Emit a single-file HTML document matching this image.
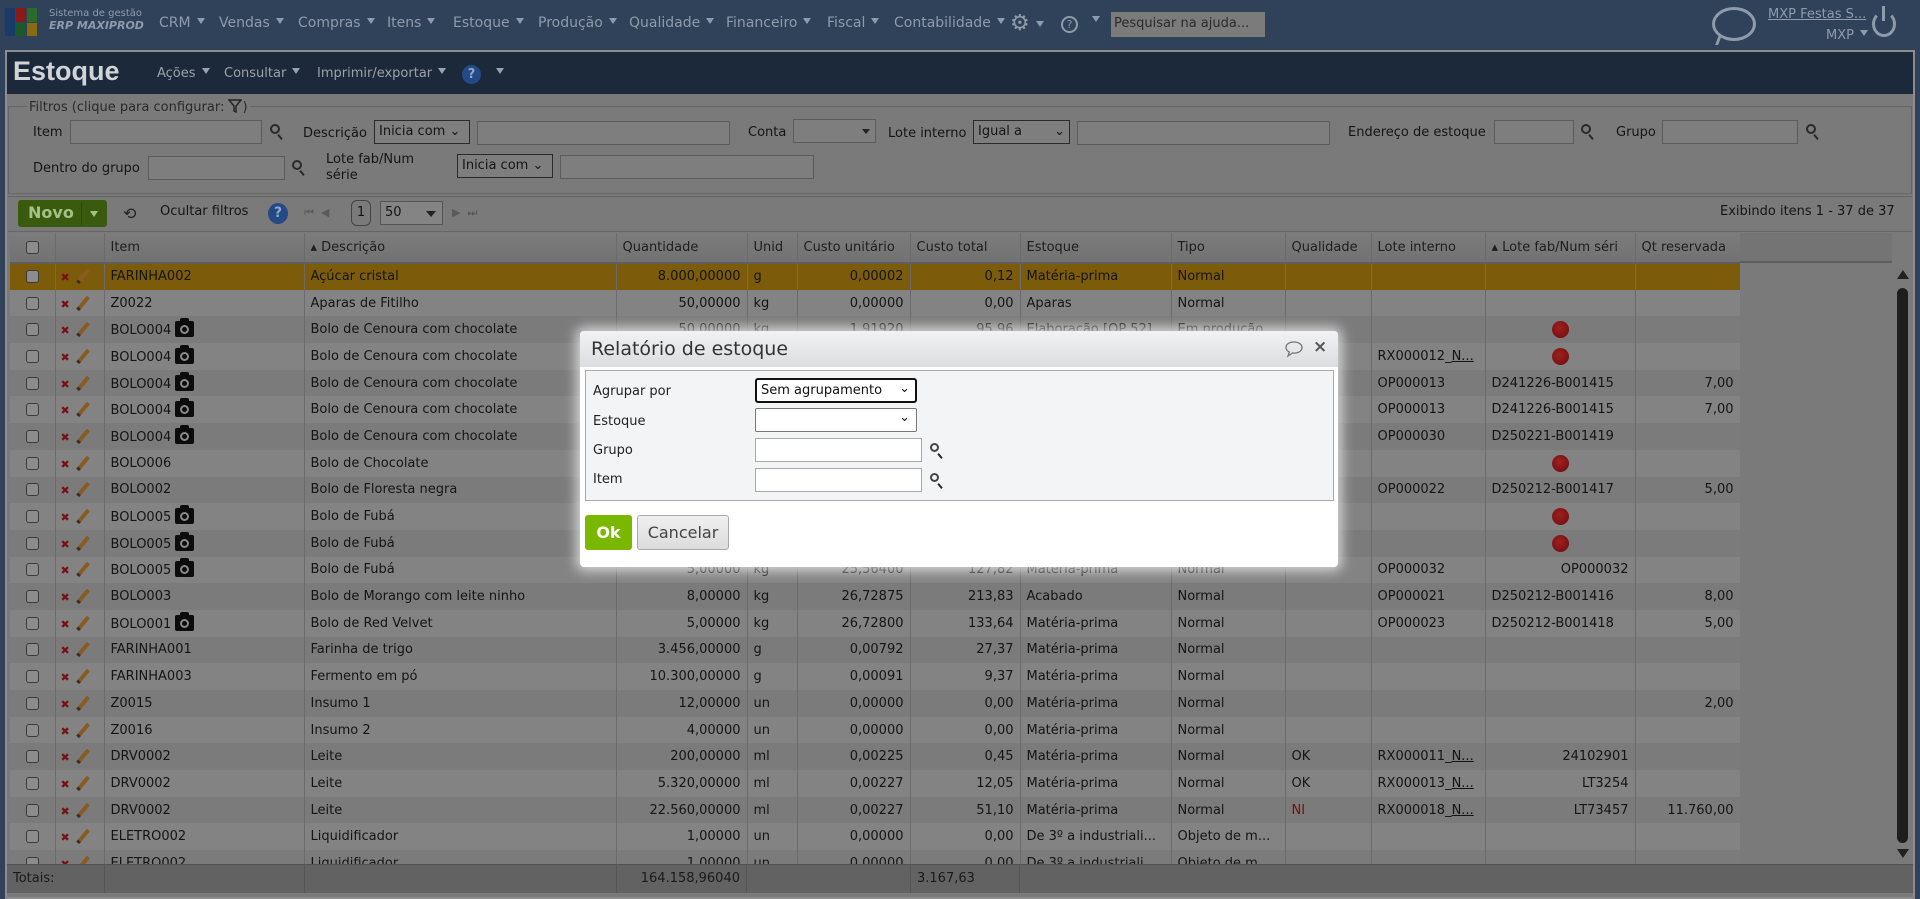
<!DOCTYPE html>
<html><head><meta charset="utf-8">
<style>
*{box-sizing:border-box;margin:0;padding:0}
body{width:1920px;height:899px;overflow:hidden;background:#2f4259;font-family:"DejaVu Sans","Liberation Sans",sans-serif;font-size:13px;color:#151515;position:relative}
.a{position:absolute;white-space:nowrap}
.nav{color:#8f9bab;font-size:14px;top:15px}
.tri{display:inline-block;width:0;height:0;border-left:4px solid transparent;border-right:4px solid transparent;border-top:6px solid #8f9bab;margin-left:6px;vertical-align:3px}
.frame{position:absolute;left:5px;top:50px;width:1910px;height:849px;background:#7a7a7a;border:2px solid #8c8c8c}
.hdr{position:absolute;left:7px;top:52px;width:1906px;height:42px;background:#1b293a}
.inp{position:absolute;background:#7e7e7e;border:1px solid #5c5c5c;height:24px}
.sel{position:absolute;background:#7e7e7e;border:1px solid #2a2a2a;height:24px;font-size:13px;padding:3px 4px}
.mag{position:absolute;width:10px;height:10px;border:2px solid #2a2a2a;border-radius:50%}
.mag:after{content:"";position:absolute;left:7px;top:8px;width:2px;height:6px;background:#2a2a2a;transform:rotate(-40deg)}
.lbl{position:absolute;font-size:13px;color:#151515}
table{position:absolute;left:10px;top:233px;border-collapse:collapse;table-layout:fixed}
td,th{height:26.7px;border-right:1px solid #6b6b6b;padding:0 6px;white-space:nowrap;overflow:hidden;font-weight:normal;text-align:left;font-size:13px}
th{height:30px;background:linear-gradient(#7c7c7c,#727272);border-bottom:2px solid #5e5e5e;color:#1e1e1e}
tr:nth-child(odd) td{background:#838383}
tr:nth-child(even) td{background:#7b7b7b}
tr.hl td{background:#7c5b0b!important}
td.r{text-align:right}
.cb{display:inline-block;width:13px;height:13px;border:1px solid #3a3a3a;border-radius:3px;background:#8c8c8c;vertical-align:middle}
.x{color:#7a1010;font-size:11px;font-weight:bold;margin-left:-1px}
.pen{display:inline-block;width:4px;height:17px;background:#8a5a22;transform:rotate(40deg);margin-left:11px;vertical-align:-4px;border-bottom:3px solid #3a3020;border-radius:1px}
.cam{display:inline-block;width:19px;height:16px;background:#0c0c0c;border-radius:2px;vertical-align:-3px;position:relative;margin-left:4px}
.cam:before{content:"";position:absolute;left:5px;top:-3px;width:9px;height:4px;background:#0c0c0c;border-radius:2px 2px 0 0}
.cam:after{content:"";position:absolute;left:5px;top:4px;width:9px;height:9px;border-radius:50%;border:2px solid #8a8a8a;box-sizing:border-box}
.dot{display:inline-block;width:17px;height:17px;border-radius:50%;background:radial-gradient(circle at 45% 40%,#a02020,#6a0c0c);vertical-align:middle}
.ni{color:#7a0c0c}
.u{text-decoration:underline}
</style></head><body>
<div class="a" style="left:5px;top:8px;width:32px;height:30px">
<div class="a" style="left:0;top:0;width:10px;height:28px;background:#1a3a6a"></div>
<div class="a" style="left:11px;top:0;width:10px;height:14px;background:#8a1a1a"></div>
<div class="a" style="left:11px;top:15px;width:10px;height:13px;background:#1a5a2a"></div>
<div class="a" style="left:22px;top:0;width:10px;height:14px;background:#2a6a2a"></div>
<div class="a" style="left:22px;top:15px;width:10px;height:13px;background:#8a6a10"></div>
</div>
<div class="a" style="left:49px;top:8px;color:#8f9bab;font-size:10px;line-height:12px">Sistema de gestão<br><b style="font-size:11px;font-style:italic">ERP MAXIPROD</b></div>
<div class="a nav" style="left:159px">CRM<span class="tri"></span></div>
<div class="a nav" style="left:219px">Vendas<span class="tri"></span></div>
<div class="a nav" style="left:298px">Compras<span class="tri"></span></div>
<div class="a nav" style="left:387px">Itens<span class="tri"></span></div>
<div class="a nav" style="left:453px">Estoque<span class="tri"></span></div>
<div class="a nav" style="left:538px">Produção<span class="tri"></span></div>
<div class="a nav" style="left:629px">Qualidade<span class="tri"></span></div>
<div class="a nav" style="left:726px">Financeiro<span class="tri"></span></div>
<div class="a nav" style="left:827px">Fiscal<span class="tri"></span></div>
<div class="a nav" style="left:894px">Contabilidade<span class="tri"></span></div>
<div class="a nav" style="left:1010px;top:11px;font-size:22px">⚙<span class="tri"></span></div>
<div class="a" style="left:1061px;top:16px;width:17px;height:17px;border:2px solid #8f9bab;border-radius:50%;color:#8f9bab;font-size:11px;text-align:center;line-height:13px">?</div>
<div class="a nav" style="left:1086px;top:13px"><span class="tri"></span></div>
<div class="a" style="left:1111px;top:12px;width:154px;height:25px;background:#7b7b7b;color:#2b2b2b;font-size:13px;padding:4px 3px">Pesquisar na ajuda...</div>
<div class="a" style="left:1712px;top:7px;width:44px;height:34px;border:3px solid #8f9bab;border-radius:50%"></div>
<div class="a" style="left:1717px;top:35px;width:8px;height:10px;border-left:3px solid #8f9bab;transform:skewX(-20deg)"></div>
<div class="a" style="left:1768px;top:7px;color:#8f9bab;font-size:13px;text-decoration:underline">MXP Festas S...</div>
<div class="a" style="left:1826px;top:28px;color:#8f9bab;font-size:13px">MXP<span class="tri"></span></div>
<div class="a" style="left:1872px;top:11px;width:24px;height:26px;border:3px solid #8f9bab;border-top-color:transparent;border-radius:50%"></div>
<div class="a" style="left:1882px;top:6px;width:3px;height:15px;background:#8f9bab"></div>

<div class="frame"></div>
<div class="hdr"></div>
<div class="a" style="left:13px;top:56px;color:#d0d4d8;font-size:27px;font-weight:bold;font-family:'Liberation Sans',sans-serif">Estoque</div>
<div class="a" style="left:157px;top:66px;color:#9aa2ac;font-size:13px">Ações<span class="tri" style="border-top-color:#9aa2ac"></span></div>
<div class="a" style="left:224px;top:66px;color:#9aa2ac;font-size:13px">Consultar<span class="tri" style="border-top-color:#9aa2ac"></span></div>
<div class="a" style="left:317px;top:66px;color:#9aa2ac;font-size:13px">Imprimir/exportar<span class="tri" style="border-top-color:#9aa2ac"></span></div>
<div class="a" style="left:462px;top:65px;width:19px;height:19px;border-radius:50%;background:#234a86;color:#8fa6c8;text-align:center;font-size:13px;font-weight:bold;line-height:19px">?</div>
<div class="a" style="left:490px;top:66px"><span class="tri" style="border-top-color:#9aa2ac"></span></div>

<div class="a" style="left:8px;top:106px;width:1904px;height:88px;border:1px solid #666"></div>
<div class="a" style="left:27px;top:99px;background:#7a7a7a;padding:0 2px;color:#2a2a2a;font-size:13px">Filtros (clique para configurar: <svg width="14" height="14" viewBox="0 0 14 14" style="vertical-align:-2px"><path d="M1 1h12L8 7v6l-2-1V7z" fill="none" stroke="#222" stroke-width="1.4"/></svg>)</div>
<div class="lbl" style="left:33px;top:125px">Item</div>
<div class="inp" style="left:70px;top:120px;width:192px"></div>
<div class="mag" style="left:270px;top:124px"></div>
<div class="lbl" style="left:303px;top:126px">Descrição</div>
<div class="sel" style="left:374px;top:120px;width:96px">Inicia com ⌄</div>
<div class="inp" style="left:477px;top:121px;width:253px"></div>
<div class="lbl" style="left:748px;top:125px">Conta</div>
<div class="inp" style="left:793px;top:119px;width:83px"></div>
<div class="a" style="left:862px;top:129px;border-left:4px solid transparent;border-right:4px solid transparent;border-top:5px solid #222"></div>
<div class="lbl" style="left:888px;top:126px">Lote interno</div>
<div class="sel" style="left:973px;top:120px;width:97px">Igual a <span style="float:right">⌄</span></div>
<div class="inp" style="left:1077px;top:121px;width:253px"></div>
<div class="lbl" style="left:1348px;top:125px">Endereço de estoque</div>
<div class="inp" style="left:1494px;top:120px;width:80px"></div>
<div class="mag" style="left:1581px;top:124px"></div>
<div class="lbl" style="left:1616px;top:125px">Grupo</div>
<div class="inp" style="left:1662px;top:120px;width:136px"></div>
<div class="mag" style="left:1806px;top:124px"></div>
<div class="lbl" style="left:33px;top:161px">Dentro do grupo</div>
<div class="inp" style="left:148px;top:156px;width:137px"></div>
<div class="mag" style="left:292px;top:160px"></div>
<div class="lbl" style="left:326px;top:152px;line-height:16px">Lote fab/Num<br>série</div>
<div class="sel" style="left:457px;top:154px;width:96px">Inicia com ⌄</div>
<div class="inp" style="left:560px;top:155px;width:254px"></div>

<div class="a" style="left:8px;top:196px;width:1904px;height:36px;border-top:1px solid #666;border-bottom:1px solid #666"></div>
<div class="a" style="left:18px;top:200px;width:89px;height:27px;background:#3a5a0e;border-radius:3px;color:#a7c08a;font-weight:bold;font-size:16px;padding:3px 10px">Novo<span style="position:absolute;left:63px;top:2px;border-left:1px solid #2e4a08;height:23px"></span><span style="position:absolute;left:72px;top:11px;border-left:4px solid transparent;border-right:4px solid transparent;border-top:6px solid #a7c08a"></span></div>
<div class="a" style="left:123px;top:204px;font-size:16px;color:#222">⟲</div>
<div class="a" style="left:160px;top:204px;font-size:13px">Ocultar filtros</div>
<div class="a" style="left:268px;top:203px;width:20px;height:21px;border-radius:50%;background:#234a86;color:#8fa6c8;text-align:center;font-size:14px;font-weight:bold;line-height:21px">?</div>
<div class="a" style="left:304px;top:206px;color:#5a5a5a;font-size:11px">⏮ &nbsp;◀</div>
<div class="a" style="left:351px;top:200px;width:20px;height:26px;border:1px solid #444;border-radius:6px;text-align:center;line-height:24px">1</div>
<div class="a" style="left:380px;top:201px;width:63px;height:24px;background:#848484;border:1px solid #555;padding:3px 4px">50<span style="position:absolute;right:6px;top:9px;border-left:5px solid transparent;border-right:5px solid transparent;border-top:6px solid #222"></span></div>
<div class="a" style="left:452px;top:206px;color:#5a5a5a;font-size:11px">▶ &nbsp;⏭</div>
<div class="a" style="left:1720px;top:204px;font-size:13px">Exibindo itens 1 - 37 de 37</div>

<table>
<colgroup><col style="width:45px"><col style="width:49px"><col style="width:200px"><col style="width:312px"><col style="width:131px"><col style="width:50px"><col style="width:113px"><col style="width:110px"><col style="width:151px"><col style="width:114px"><col style="width:86px"><col style="width:114px"><col style="width:150px"><col style="width:105px"></colgroup>
<tr><th style="text-align:center"><span class="cb"></span></th><th></th><th>Item</th><th>▴ Descrição</th><th>Quantidade</th><th>Unid</th><th>Custo unitário</th><th>Custo total</th><th>Estoque</th><th>Tipo</th><th>Qualidade</th><th>Lote interno</th><th>▴ Lote fab/Num séri</th><th>Qt reservada</th></tr>
<tr class="hl"><td style="text-align:center"><span class="cb"></span></td><td><span class="x">✖</span><span class="pen"></span></td><td>FARINHA002</td><td>Açúcar cristal</td><td class="r">8.000,00000</td><td>g</td><td class="r">0,00002</td><td class="r">0,12</td><td>Matéria-prima</td><td>Normal</td><td></td><td></td><td></td><td></td></tr>
<tr><td style="text-align:center"><span class="cb"></span></td><td><span class="x">✖</span><span class="pen"></span></td><td>Z0022</td><td>Aparas de Fitilho</td><td class="r">50,00000</td><td>kg</td><td class="r">0,00000</td><td class="r">0,00</td><td>Aparas</td><td>Normal</td><td></td><td></td><td></td><td></td></tr>
<tr><td style="text-align:center"><span class="cb"></span></td><td><span class="x">✖</span><span class="pen"></span></td><td>BOLO004<span class="cam"></span></td><td>Bolo de Cenoura com chocolate</td><td class="r">50,00000</td><td>kg</td><td class="r">1,91920</td><td class="r">95,96</td><td>Elaboração [OP 52]</td><td>Em produção</td><td></td><td></td><td style="text-align:center"><span class="dot"></span></td><td></td></tr>
<tr><td style="text-align:center"><span class="cb"></span></td><td><span class="x">✖</span><span class="pen"></span></td><td>BOLO004<span class="cam"></span></td><td>Bolo de Cenoura com chocolate</td><td class="r">5,00000</td><td>kg</td><td class="r">1,91920</td><td class="r">9,60</td><td>Matéria-prima</td><td>Normal</td><td></td><td>RX000012_<span class="u">N...</span></td><td style="text-align:center"><span class="dot"></span></td><td></td></tr>
<tr><td style="text-align:center"><span class="cb"></span></td><td><span class="x">✖</span><span class="pen"></span></td><td>BOLO004<span class="cam"></span></td><td>Bolo de Cenoura com chocolate</td><td class="r">7,00000</td><td>kg</td><td class="r">1,91920</td><td class="r">13,43</td><td>Matéria-prima</td><td>Normal</td><td></td><td>OP000013</td><td>D241226-B001415</td><td class="r">7,00</td></tr>
<tr><td style="text-align:center"><span class="cb"></span></td><td><span class="x">✖</span><span class="pen"></span></td><td>BOLO004<span class="cam"></span></td><td>Bolo de Cenoura com chocolate</td><td class="r">7,00000</td><td>kg</td><td class="r">1,91920</td><td class="r">13,43</td><td>Matéria-prima</td><td>Normal</td><td></td><td>OP000013</td><td>D241226-B001415</td><td class="r">7,00</td></tr>
<tr><td style="text-align:center"><span class="cb"></span></td><td><span class="x">✖</span><span class="pen"></span></td><td>BOLO004<span class="cam"></span></td><td>Bolo de Cenoura com chocolate</td><td class="r">5,00000</td><td>kg</td><td class="r">1,91920</td><td class="r">9,60</td><td>Matéria-prima</td><td>Normal</td><td></td><td>OP000030</td><td>D250221-B001419</td><td></td></tr>
<tr><td style="text-align:center"><span class="cb"></span></td><td><span class="x">✖</span><span class="pen"></span></td><td>BOLO006</td><td>Bolo de Chocolate</td><td class="r">5,00000</td><td>kg</td><td class="r">20,00000</td><td class="r">100,00</td><td>Matéria-prima</td><td>Normal</td><td></td><td></td><td style="text-align:center"><span class="dot"></span></td><td></td></tr>
<tr><td style="text-align:center"><span class="cb"></span></td><td><span class="x">✖</span><span class="pen"></span></td><td>BOLO002</td><td>Bolo de Floresta negra</td><td class="r">5,00000</td><td>kg</td><td class="r">22,00000</td><td class="r">110,00</td><td>Matéria-prima</td><td>Normal</td><td></td><td>OP000022</td><td>D250212-B001417</td><td class="r">5,00</td></tr>
<tr><td style="text-align:center"><span class="cb"></span></td><td><span class="x">✖</span><span class="pen"></span></td><td>BOLO005<span class="cam"></span></td><td>Bolo de Fubá</td><td class="r">5,00000</td><td>kg</td><td class="r">25,56400</td><td class="r">127,82</td><td>Matéria-prima</td><td>Normal</td><td></td><td></td><td style="text-align:center"><span class="dot"></span></td><td></td></tr>
<tr><td style="text-align:center"><span class="cb"></span></td><td><span class="x">✖</span><span class="pen"></span></td><td>BOLO005<span class="cam"></span></td><td>Bolo de Fubá</td><td class="r">5,00000</td><td>kg</td><td class="r">25,56400</td><td class="r">127,82</td><td>Matéria-prima</td><td>Normal</td><td></td><td></td><td style="text-align:center"><span class="dot"></span></td><td></td></tr>
<tr><td style="text-align:center"><span class="cb"></span></td><td><span class="x">✖</span><span class="pen"></span></td><td>BOLO005<span class="cam"></span></td><td>Bolo de Fubá</td><td class="r">5,00000</td><td>kg</td><td class="r">25,56400</td><td class="r">127,82</td><td>Matéria-prima</td><td>Normal</td><td></td><td>OP000032</td><td class="r">OP000032</td><td></td></tr>
<tr><td style="text-align:center"><span class="cb"></span></td><td><span class="x">✖</span><span class="pen"></span></td><td>BOLO003</td><td>Bolo de Morango com leite ninho</td><td class="r">8,00000</td><td>kg</td><td class="r">26,72875</td><td class="r">213,83</td><td>Acabado</td><td>Normal</td><td></td><td>OP000021</td><td>D250212-B001416</td><td class="r">8,00</td></tr>
<tr><td style="text-align:center"><span class="cb"></span></td><td><span class="x">✖</span><span class="pen"></span></td><td>BOLO001<span class="cam"></span></td><td>Bolo de Red Velvet</td><td class="r">5,00000</td><td>kg</td><td class="r">26,72800</td><td class="r">133,64</td><td>Matéria-prima</td><td>Normal</td><td></td><td>OP000023</td><td>D250212-B001418</td><td class="r">5,00</td></tr>
<tr><td style="text-align:center"><span class="cb"></span></td><td><span class="x">✖</span><span class="pen"></span></td><td>FARINHA001</td><td>Farinha de trigo</td><td class="r">3.456,00000</td><td>g</td><td class="r">0,00792</td><td class="r">27,37</td><td>Matéria-prima</td><td>Normal</td><td></td><td></td><td></td><td></td></tr>
<tr><td style="text-align:center"><span class="cb"></span></td><td><span class="x">✖</span><span class="pen"></span></td><td>FARINHA003</td><td>Fermento em pó</td><td class="r">10.300,00000</td><td>g</td><td class="r">0,00091</td><td class="r">9,37</td><td>Matéria-prima</td><td>Normal</td><td></td><td></td><td></td><td></td></tr>
<tr><td style="text-align:center"><span class="cb"></span></td><td><span class="x">✖</span><span class="pen"></span></td><td>Z0015</td><td>Insumo 1</td><td class="r">12,00000</td><td>un</td><td class="r">0,00000</td><td class="r">0,00</td><td>Matéria-prima</td><td>Normal</td><td></td><td></td><td></td><td class="r">2,00</td></tr>
<tr><td style="text-align:center"><span class="cb"></span></td><td><span class="x">✖</span><span class="pen"></span></td><td>Z0016</td><td>Insumo 2</td><td class="r">4,00000</td><td>un</td><td class="r">0,00000</td><td class="r">0,00</td><td>Matéria-prima</td><td>Normal</td><td></td><td></td><td></td><td></td></tr>
<tr><td style="text-align:center"><span class="cb"></span></td><td><span class="x">✖</span><span class="pen"></span></td><td>DRV0002</td><td>Leite</td><td class="r">200,00000</td><td>ml</td><td class="r">0,00225</td><td class="r">0,45</td><td>Matéria-prima</td><td>Normal</td><td>OK</td><td>RX000011_<span class="u">N...</span></td><td class="r">24102901</td><td></td></tr>
<tr><td style="text-align:center"><span class="cb"></span></td><td><span class="x">✖</span><span class="pen"></span></td><td>DRV0002</td><td>Leite</td><td class="r">5.320,00000</td><td>ml</td><td class="r">0,00227</td><td class="r">12,05</td><td>Matéria-prima</td><td>Normal</td><td>OK</td><td>RX000013_<span class="u">N...</span></td><td class="r">LT3254</td><td></td></tr>
<tr><td style="text-align:center"><span class="cb"></span></td><td><span class="x">✖</span><span class="pen"></span></td><td>DRV0002</td><td>Leite</td><td class="r">22.560,00000</td><td>ml</td><td class="r">0,00227</td><td class="r">51,10</td><td>Matéria-prima</td><td>Normal</td><td class="ni">NI</td><td>RX000018_<span class="u">N...</span></td><td class="r">LT73457</td><td class="r">11.760,00</td></tr>
<tr><td style="text-align:center"><span class="cb"></span></td><td><span class="x">✖</span><span class="pen"></span></td><td>ELETRO002</td><td>Liquidificador</td><td class="r">1,00000</td><td>un</td><td class="r">0,00000</td><td class="r">0,00</td><td>De 3º a industriali...</td><td>Objeto de m...</td><td></td><td></td><td></td><td></td></tr>
<tr><td style="text-align:center"><span class="cb"></span></td><td><span class="x">✖</span><span class="pen"></span></td><td>ELETRO002</td><td>Liquidificador</td><td class="r">1,00000</td><td>un</td><td class="r">0,00000</td><td class="r">0,00</td><td>De 3º a industriali...</td><td>Objeto de m...</td><td></td><td></td><td></td><td></td></tr>
</table>
<div class="a" style="left:1740px;top:233px;width:152px;height:30px;background:#747474;border-bottom:2px solid #5e5e5e"></div>
<div class="a" style="left:1740px;top:263px;width:152px;height:602px;background:#7a7a7a"></div>
<div class="a" style="left:1892px;top:263px;width:21px;height:602px;background:#7a7a7a"></div>
<div class="a" style="left:1897px;top:270px;border-left:6px solid transparent;border-right:6px solid transparent;border-bottom:9px solid #222"></div>
<div class="a" style="left:1897px;top:288px;width:11px;height:555px;background:#1e1e1e;border-radius:6px"></div>
<div class="a" style="left:1897px;top:849px;border-left:6px solid transparent;border-right:6px solid transparent;border-top:9px solid #222"></div>
<div class="a" style="left:7px;top:864px;width:1906px;height:29px;background:#626262;border-top:1px solid #555"></div>
<div class="a" style="left:13px;top:871px;font-size:13px;color:#1a1a1a">Totais:</div>
<div class="a" style="left:616px;top:864px;width:131px;height:29px;border-left:1px solid #555;border-right:1px solid #555;text-align:right;padding:7px 6px;color:#1a1a1a">164.158,96040</div>
<div class="a" style="left:910px;top:864px;width:110px;height:29px;border-left:1px solid #555;border-right:1px solid #555;padding:7px 6px;color:#1a1a1a">3.167,63</div>
<div class="a" style="left:304px;top:864px;height:29px;border-left:1px solid #555"></div>
<div class="a" style="left:104px;top:864px;height:29px;border-left:1px solid #555"></div>

<div class="a" style="left:580px;top:331px;width:758px;height:236px;background:#fff;border-radius:4px;box-shadow:0 0 12px 4px rgba(235,235,235,0.8)">
<div class="a" style="left:0;top:0;width:758px;height:36px;background:linear-gradient(#f2f2f4,#dcdde0);border-radius:4px 4px 0 0"></div>
<div class="a" style="left:11px;top:7px;font-size:19px;color:#333">Relatório de estoque</div>
<svg class="a" style="left:704px;top:9px" width="20" height="18" viewBox="0 0 20 18"><path d="M10 2C5 2 2 4.5 2 7.5c0 2 1.3 3.6 3.3 4.5L4 16l4.5-3c.5 0 1 .1 1.5.1 5 0 8-2.5 8-5.5S15 2 10 2z" fill="none" stroke="#777" stroke-width="1.3"/></svg>
<div class="a" style="left:733px;top:6px;font-size:17px;font-weight:bold;color:#555">×</div>
<div class="a" style="left:5px;top:39px;width:749px;height:131px;background:#f3f4f5;border:1px solid #aaa"></div>
<div class="a" style="left:13px;top:53px;font-size:13px;color:#222">Agrupar por</div>
<div class="a" style="left:13px;top:83px;font-size:13px;color:#222">Estoque</div>
<div class="a" style="left:13px;top:112px;font-size:13px;color:#222">Grupo</div>
<div class="a" style="left:13px;top:141px;font-size:13px;color:#222">Item</div>
<div class="a" style="left:175px;top:47px;width:162px;height:25px;border:2px solid #111;border-radius:3px;background:#fff;font-size:13px;padding:3px 4px;color:#111">Sem agrupamento<span style="position:absolute;right:5px;top:1px">⌄</span></div>
<div class="a" style="left:175px;top:77px;width:162px;height:24px;border:1px solid #777;border-radius:2px;background:#fff;font-size:13px"><span style="position:absolute;right:6px;top:1px">⌄</span></div>
<div class="a" style="left:175px;top:107px;width:167px;height:24px;border:1px solid #aaa;background:#fff"></div>
<div class="a" style="left:175px;top:137px;width:167px;height:24px;border:1px solid #aaa;background:#fff"></div>
<div class="mag" style="left:350px;top:112px;border-color:#444;width:9px;height:9px"></div>
<div class="mag" style="left:350px;top:142px;border-color:#444;width:9px;height:9px"></div>
<div class="a" style="left:5px;top:184px;width:47px;height:35px;background:#7ab800;border-radius:3px;color:#fff;font-weight:bold;font-size:16px;text-align:center;line-height:35px">Ok</div>
<div class="a" style="left:57px;top:184px;width:92px;height:35px;background:linear-gradient(#f0f0f0,#dcdcdc);border:1px solid #aaa;border-radius:3px;color:#444;font-size:16px;text-align:center;line-height:33px">Cancelar</div>
</div>
</body></html>
